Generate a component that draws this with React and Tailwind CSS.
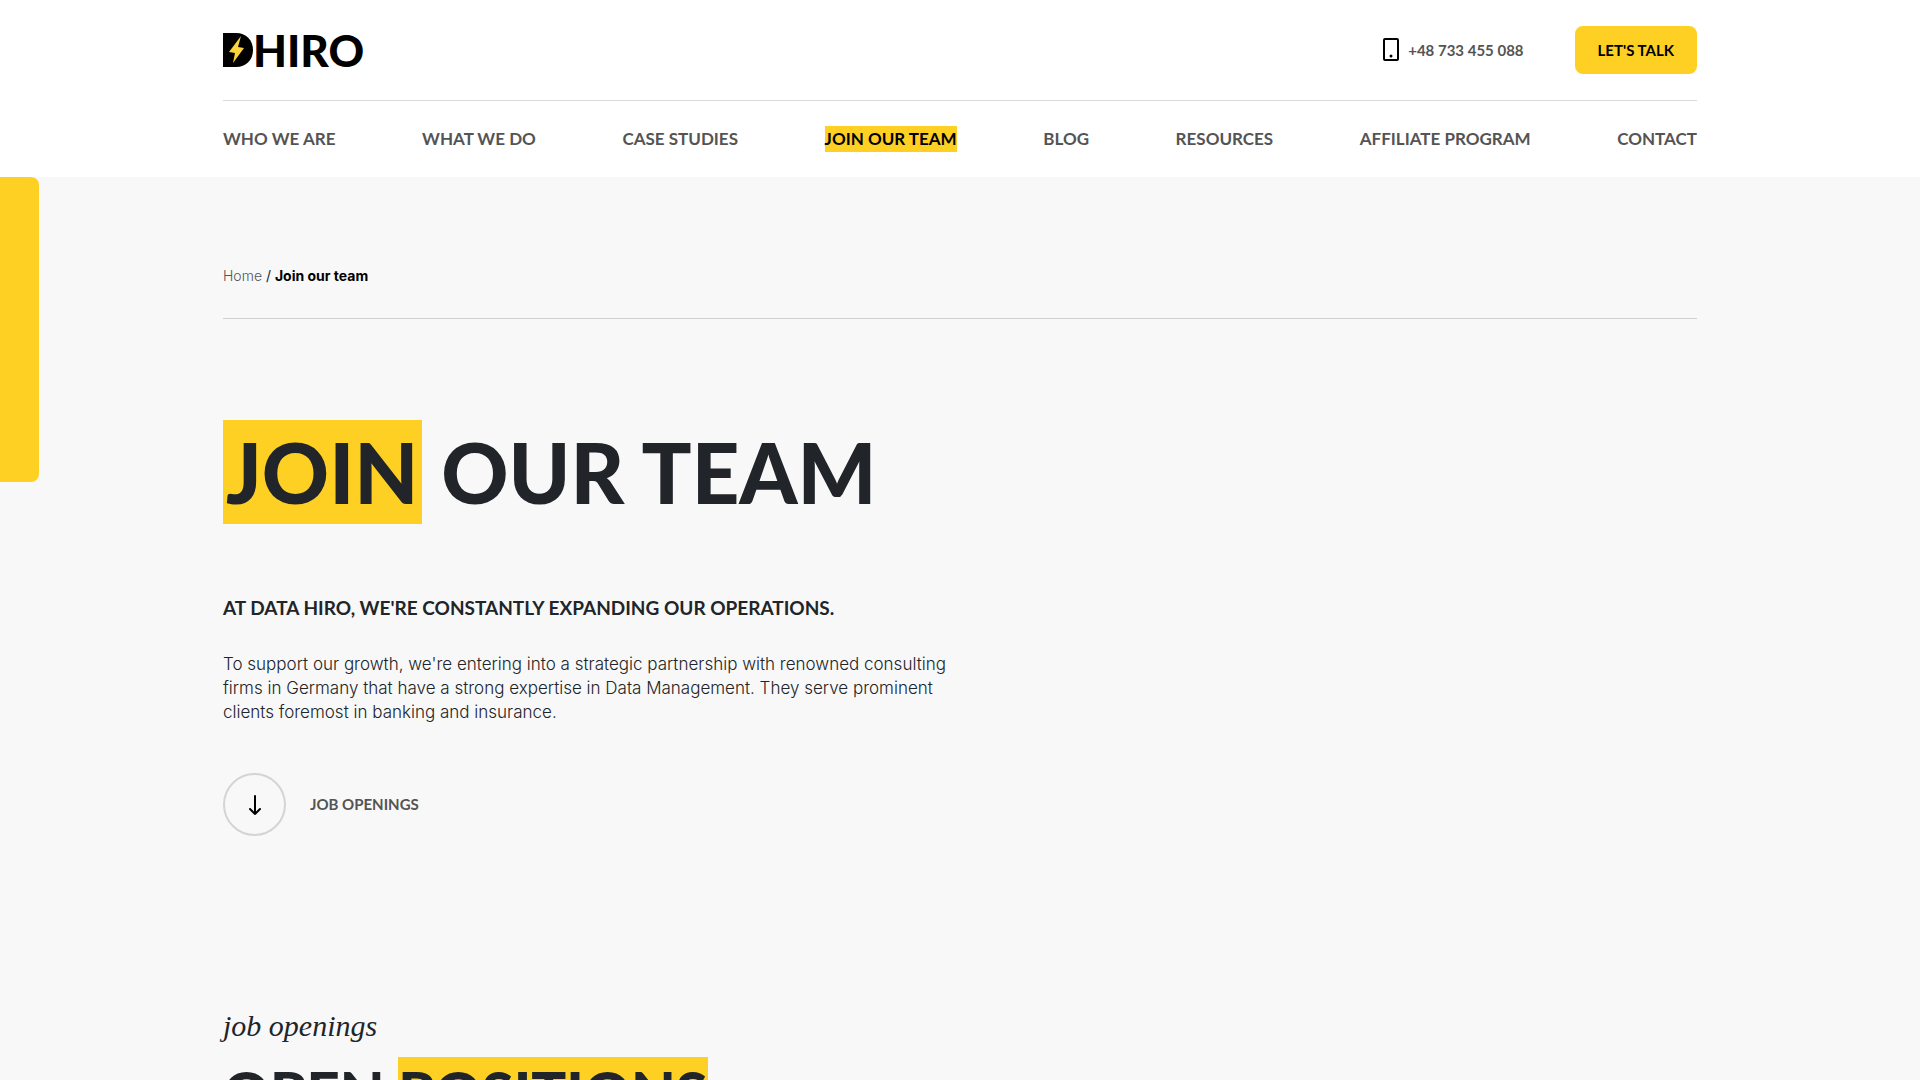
import React from 'react';

const navItems = [
  'Who we are',
  'What we do',
  'Case studies',
  'Join our team',
  'Blog',
  'Resources',
  'Affiliate program',
  'Contact',
];

function Logo() {
  return (
    <a href="#" className="flex items-center text-black">
      <svg width="30" height="36" viewBox="0 0 30 36" role="img" aria-label="D">
        <path d="M0 1H13C23 1 30 8 30 18S23 35 13 35H0Z" fill="#000" />
        <path d="M18 4L6 20L12 21L10 31L21 16L15 15Z" fill="#fdd43a" />
      </svg>
      <span className="font-['Lato',sans-serif] text-[44px] leading-9 font-black">HIRO</span>
    </a>
  );
}

function Header() {
  return (
    <header className="bg-white px-6 font-['Lato',sans-serif] font-bold uppercase text-[#545454]">
      <div className="mx-auto w-full max-w-[1474px]">
        <div className="flex h-[101px] items-center justify-between border-b border-[#dadada]">
          <Logo />
          <div className="flex items-center gap-[51px]">
            <a href="tel:+48733455088" className="flex items-center gap-2 text-[15px]">
              <svg width="18" height="24" viewBox="0 0 18 24" fill="none">
                <rect x="2" y="1" width="14" height="21" rx="1" stroke="#000" strokeWidth="2" />
                <circle cx="9" cy="18" r="1.5" fill="#000" />
              </svg>
              +48 733 455 088
            </a>
            <button className="h-12 rounded-lg bg-[#fed023] px-[23px] text-[15px] font-bold uppercase text-black">
              Let's talk
            </button>
          </div>
        </div>
        <nav className="flex h-[76px] items-center justify-between text-[17px]">
          {navItems.map((item) => (
            <a
              key={item}
              href="#"
              className={item === 'Join our team' ? 'bg-[#fed023] leading-[26px] text-black' : 'leading-[26px]'}
            >
              {item}
            </a>
          ))}
        </nav>
      </div>
    </header>
  );
}

export default function App() {
  return (
    <div className="h-screen overflow-hidden bg-[#f8f8f8] text-[#212529]">
      <Header />
      <main className="relative px-6">
        <div className="absolute top-0 left-0 h-[305px] w-[39px] rounded-r-lg bg-[#fed023]" />
        <div className="mx-auto w-full max-w-[1474px]">
          <div className="border-b border-[#d0d0d0] pt-[88px] pb-8 font-['Inter',sans-serif] text-sm leading-[21px]">
            <a href="#" className="font-light text-[#545454]">Home</a>
            <span> / </span>
            <strong className="text-black">Join our team</strong>
          </div>

          <h1 className="mt-[101px] font-['Lato',sans-serif] text-[83px] leading-[104px] font-black uppercase">
            <span className="inline-block bg-[#fed023] px-[3px]">Join</span> our team
          </h1>
          <h2 className="mt-[70px] font-['Lato',sans-serif] text-[19px] leading-7 font-bold uppercase">
            At Data Hiro, we're constantly expanding our operations.
          </h2>
          <p className="mt-[30px] max-w-[740px] font-['Inter',sans-serif] text-[17px] leading-6 font-light">
            To support our growth, we're entering into a strategic partnership with renowned consulting
            firms in Germany that have a strong expertise in Data Management. They serve prominent
            clients foremost in banking and insurance.
          </p>

          <a
            href="#openings"
            className="mt-[49px] inline-flex items-center gap-6 font-['Lato',sans-serif] text-[15px] font-bold uppercase text-[#545454]"
          >
            <span className="flex size-[63px] items-center justify-center rounded-full border-2 border-[#d4d4d4]">
              <svg width="14" height="20" viewBox="0 0 14 20" fill="none" stroke="#000" strokeWidth="2" strokeLinecap="round" strokeLinejoin="round">
                <path d="M7 1V19M2 14L7 19L12 14" />
              </svg>
            </span>
            Job openings
          </a>

          <section id="openings" className="mt-[167px]">
            <p className="mb-2 font-['Liberation_Serif',serif] text-[30px] leading-[46px] italic">job openings</p>
            <h2 className="font-['Lato',sans-serif] text-[58px] leading-[70px] font-black uppercase">
              Open <span className="inline-block bg-[#fed023]">positions</span>
            </h2>
          </section>
        </div>
      </main>
    </div>
  );
}
